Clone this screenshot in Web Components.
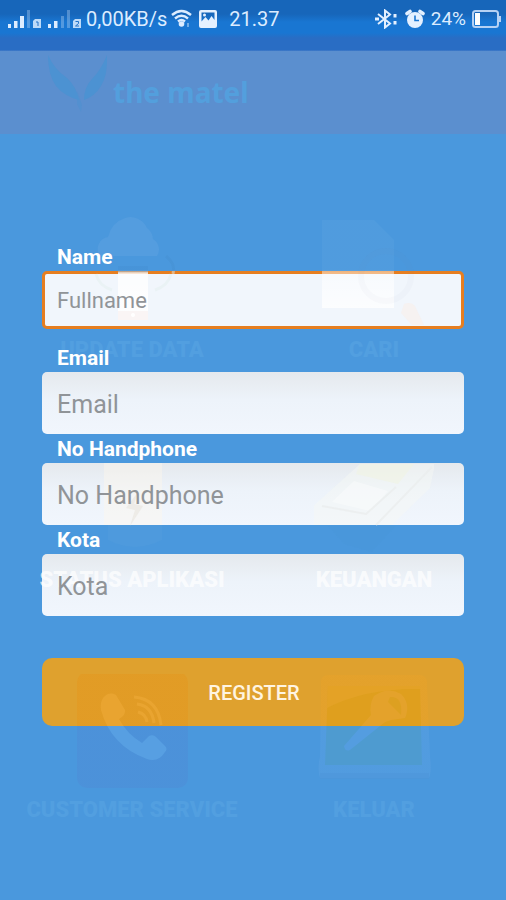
<!DOCTYPE html>
<html lang="id">
<head>
<meta charset="utf-8">
<meta name="viewport" content="width=device-width, initial-scale=1">
<title>Register</title>
<style>
html,body{margin:0;height:100%}
body{background:#4a98dd;font-family:Roboto,"Noto Sans",sans-serif}
</style>
</head>
<body>
<register-screen></register-screen>
<script>
const define=(name,html,init)=>customElements.define(name,class extends HTMLElement{
  constructor(){
    super();
    const t=document.createElement('template');
    t.innerHTML=html;
    this.attachShadow({mode:'open'}).append(t.content.cloneNode(true));
  }
  connectedCallback(){ if(init) init(this,this.shadowRoot); }
});

define('status-bar',`
<style>
:host{display:flex;align-items:flex-start;height:51px;box-sizing:border-box;padding:6px 5px 0 7px;color:#dcecff;
 background:linear-gradient(#1766ba 0 14px,#1976d2 22px 33px,#296dc4 38px 50px,#4a80ca 51px);font-size:20px;line-height:26px}
div{display:flex;align-items:center;height:26px}
svg{display:block;flex:none}
.left{gap:4px}.right{gap:6px;margin-left:auto;font-size:19px}
.image{margin-left:3px}
.time{margin-left:8px}
</style>
<div class="left">
 <svg width="75" height="24" viewBox="0 0 75 24" fill="#dcecff" aria-hidden="true">
  <path d="M1 17h3v4H1zM7 14h3.500v7H7zM13 9h4v12h-4zM41 17h3v4h-3zM47 14h3.500v7H47z"/>
  <path d="M20 3h3v18h-3zM54 9h3v12h-3zM60 3h3v18h-3z" opacity=".3"/>
  <path d="M28 12h6v9h-8v-7zM68 12h6v9h-8v-7z" opacity=".85"/>
  <path d="M29 15h2v4M68.500 14.500h3v2l-3 2.500h3.500" stroke="#2473c8" fill="none"/>
 </svg>
 <span>0,00KB/s</span>
 <svg width="21" height="20" viewBox="0 0 21 20" fill="none" stroke="#dcecff" stroke-width="2.400" aria-hidden="true">
  <path d="M1 6q9.500-8 19 0M4 9.500q6.500-5.500 13 0M7 12.500q3.500-3 7 0"/><circle cx="10.500" cy="15" r="2.800" fill="#dcecff" stroke="none"/><path d="M17 14v4" stroke-width="1.500" opacity=".6"/>
 </svg>
 <svg class="image" width="18" height="18" viewBox="0 0 18 18" aria-hidden="true">
  <path fill="#e4f0ff" fill-rule="evenodd" d="M2 0h14a2 2 0 0 1 2 2v14a2 2 0 0 1-2 2H2a2 2 0 0 1-2-2V2a2 2 0 0 1 2-2zM2.500 2.500v9l4-4.500 3 3.500 3-4.500 3 4v-7.500z"/><circle cx="5.500" cy="5" r="1.500" fill="#e4f0ff"/>
 </svg>
 <span class="time">21.37</span>
</div>
<div class="right">
 <svg width="24" height="20" viewBox="0 0 24 20" fill="none" stroke="#e4f0ff" stroke-width="2" aria-hidden="true">
  <path d="M3 5l12 9.500-5 4v-17l5 4L3 15"/><path d="M0 10h4M20 5v3.500M20 12v3.500" stroke-width="3"/>
 </svg>
 <svg width="20" height="20" viewBox="0 0 20 20" aria-hidden="true">
  <circle cx="10" cy="11" r="8" fill="#e4f0ff"/><path d="M2 4.500l3-2M18 4.500l-3-2" stroke="#e4f0ff" stroke-width="3.600" stroke-linecap="round"/><path d="M10 6.500v5h4" fill="none" stroke="#1976d2" stroke-width="1.600"/>
 </svg>
 <span>24%</span>
 <svg width="29" height="18" viewBox="0 0 29 18" aria-hidden="true">
  <rect x="1" y="1" width="25" height="16" rx="2.500" fill="none" stroke="#b5d1f4" stroke-width="2"/><path d="M3 3h5v12H3z" fill="#fff"/><path d="M27 6h2v6h-2z" fill="#b5d1f4"/>
 </svg>
</div>`);

define('brand-header',`
<style>
:host{display:flex;height:83px;box-sizing:border-box;padding:0 46px;background:#5b8fcf;color:#539fdd;font:700 28px/83px "Noto Sans",sans-serif;gap:5px}
svg{flex:none;margin-top:2px}
</style>
<svg width="62" height="60" viewBox="0 0 62 60" fill="#4993d3" opacity=".8" aria-hidden="true"><path d="M2 2Q8 16 21 25Q30 33 33 47Q18 43 10 33Q2 22 2 2zM61 2Q62 22 55 33Q49 43 38 47Q38 34 46 26Q55 17 61 2z"/><path d="M31 38l5 14-1 7-4-8z" opacity=".5"/></svg>
<span>the matel</span>`);

define('menu-tile',`
<style>
:host{display:flex;flex-direction:column;align-items:center;gap:4px;font-weight:900;font-size:22px;line-height:24px;color:var(--tone,#529fe0)}
span{white-space:nowrap}
</style>
<slot name="icon"></slot><span><slot></slot></span>`);

define('menu-backdrop',`
<style>
:host{display:grid;grid-template-columns:1fr 1fr;grid-auto-rows:148px;row-gap:82px;padding:80px 11px 0;pointer-events:none}
svg{width:120px;height:120px;display:block}
.light{--tone:rgba(255,255,255,.7)}
</style>
<menu-tile>
 <svg slot="icon" viewBox="0 0 120 120">
  <defs><linearGradient id="a" gradientUnits="userSpaceOnUse" x1="0" y1="56" x2="0" y2="114"><stop offset="0" stop-color="#3f88cb" stop-opacity=".25"/><stop offset=".05" stop-color="#fff" stop-opacity=".8"/><stop offset="1" stop-color="#fff" stop-opacity=".9"/></linearGradient>
  <linearGradient id="g" gradientUnits="userSpaceOnUse" x1="0" y1="0" x2="0" y2="120"><stop offset=".47" stop-color="#4590d2" stop-opacity=".5"/><stop offset=".48" stop-color="#e3efee" stop-opacity=".5"/></linearGradient></defs>
  <path d="M28 42a12 12 0 0 1 8-19 26 26 0 0 1 17-19 18 18 0 0 1 22 10 15 15 0 0 1 6 11 12 12 0 0 1 4 17z" fill="#5da2e1" opacity=".5"/>
  <path d="M24 60q3 12 16 16M99 60q-3 12-16 16M94 42q10 8 7 18" fill="none" stroke="url(#g)" stroke-width="3"/>
  <path d="M46 52h30v54H46z" fill="url(#a)"/>
  <path d="M46 97h30v9H46z" fill="#f9f2f2" opacity=".8"/><circle cx="61" cy="101" r="2" fill="#fff"/>
 </svg>UPDATE DATA</menu-tile>
<menu-tile>
 <svg slot="icon" viewBox="0 0 120 120">
  <defs><linearGradient id="b" gradientUnits="userSpaceOnUse" x1="0" y1="0" x2="0" y2="120"><stop offset=".47" stop-color="#fff" stop-opacity=".035"/><stop offset=".48" stop-color="#fff" stop-opacity=".45"/><stop offset=".8" stop-color="#fff" stop-opacity=".8"/></linearGradient></defs>
  <path d="M8 6h52l20 20v68H8z" fill="url(#b)"/>
  <circle cx="72" cy="62" r="25" fill="none" stroke="#7e8f98" stroke-width="6" opacity=".03"/>
  <path d="M90 90q7-3 11 2l9 19H98l-11-12z" fill="#fcede5" opacity=".5"/>
 </svg>CARI</menu-tile>
<menu-tile class="light">
 <svg slot="icon" viewBox="0 0 120 120">
  <path d="M32 19h58v62H32z" fill="#fff8ec" opacity=".4"/><path d="M36 81h54v15q-27 14-54 0z" fill="#64a7df" opacity=".15"/><path d="M66 48L54 64l9 2-5 16 13-20-9-2z" fill="#e5e2da" opacity=".5"/>
 </svg>STATUS APLIKASI</menu-tile>
<menu-tile class="light">
 <svg slot="icon" viewBox="0 0 120 120">
  <path d="M46 20h75l-5 24-38 37H-6V67z" fill="#f7f8f5" opacity=".45"/>
  <path d="M46 20h54l-16 20-42-10z" fill="#f0f4e2" opacity=".6"/>
  <path d="M40 37l34 10-18 20-38-9z" fill="#fff" opacity=".35"/><path d="M8 62l44 8 30-27M62 81l56-58" fill="none" stroke="#e9ecec" stroke-width="2" opacity=".7"/>
  <path d="M14 82h68l-24 26-28-8z" fill="#458fd2" opacity=".1"/>
 </svg>KEUANGAN</menu-tile>
<menu-tile>
 <svg slot="icon" viewBox="0 0 120 120">
  <defs><linearGradient id="c" gradientUnits="userSpaceOnUse" x1="0" y1="0" x2="0" y2="120"><stop offset=".435" stop-color="#e39921" stop-opacity=".65"/><stop offset=".436" stop-color="#4d8fd8" stop-opacity=".7"/></linearGradient>
  <linearGradient id="d" gradientUnits="userSpaceOnUse" x1="0" y1="0" x2="0" y2="120"><stop offset=".435" stop-color="#e9a430"/><stop offset=".436" stop-color="#579fe2"/></linearGradient></defs>
  <rect x="5" y="-2" width="111" height="116" rx="10" fill="url(#c)"/>
  <path d="M31 24q6-7 13-3l9 15q1 5-6 9 8 15 23 24l7-7q4-2 7 1l9 9q3 3 0 6-7 11-18 7-36-13-46-49-1-7 2-12z" fill="url(#d)"/>
  <path d="M62 23q24 2 27 28M65 30q15 2 17 19M66 38q8 2 9 10" fill="none" stroke="url(#d)" stroke-width="3"/>
 </svg>CUSTOMER SERVICE</menu-tile>
<menu-tile>
 <svg slot="icon" viewBox="0 0 120 120" opacity=".85">
  <defs><linearGradient id="e" gradientUnits="userSpaceOnUse" x1="0" y1="0" x2="0" y2="120"><stop offset=".435" stop-color="#e6a32b"/><stop offset=".436" stop-color="#569ee1"/></linearGradient>
  <linearGradient id="f" gradientUnits="userSpaceOnUse" x1="0" y1="0" x2="0" y2="120"><stop offset=".435" stop-color="#df9f1c"/><stop offset=".436" stop-color="#4f9cce"/></linearGradient></defs>
  <path d="M14 1h92q7 0 7 8l3 73q2 16-1 22H6q-3-8 0-22L7 9q0-8 7-8z" fill="url(#e)" opacity=".8"/>
  <path d="M14 12h92l2 79H11z" fill="url(#f)"/><path d="M14 12h92v3Q52 14 13 34z" fill="#e7a529" opacity=".7"/>
  <path d="M60 22q14-10 27-2 10 10 4 24l-14 2-6 2-35 28q-5 2-6-4l27-31q-2-10 3-19z" fill="url(#e)"/>
  <path d="M76 23q13-1 11 18L74 28z" fill="#dda01f"/><path d="M6 99h109v6H6z" fill="#4d94d7" opacity=".5"/>
 </svg>KELUAR</menu-tile>`);

/* The plate sits below the backdrop and the text box above it, so typed text stays clear. */
define('form-field',`
<style>
:host{display:grid;grid-template-rows:29px 62px}
label{z-index:1;line-height:30px;padding-left:15px;font-size:21px;font-weight:700;color:#fff}
.plate{grid-area:2/1;z-index:-1;box-sizing:border-box;border-radius:5px;background:linear-gradient(#e5e9ed,#edf3fa 45%,#f1f6fd)}
input{grid-area:2/1;z-index:1;width:100%;min-width:0;box-sizing:border-box;border:0;padding:2px 15px 0;margin:0;font:400 25px Roboto,sans-serif;color:#555;outline:none;background:transparent}
input::placeholder{color:#909498;opacity:1}
:host([active]){grid-template-rows:29px 58px;margin-bottom:14px}
:host([active]) .plate{border:3px solid #e67e20;background:#f1f6fc}
:host([active]) input{font-size:22px;padding-top:0}
</style>
<label for="field"></label><div class="plate"></div><input id="field" type="text">`,
(el,root)=>{
  root.querySelector('label').textContent=el.getAttribute('label');
  const input=root.querySelector('input');
  input.placeholder=el.getAttribute('hint');
  input.type=el.getAttribute('type')||'text';
});

define('action-button',`
<style>
:host{display:block}
button{display:block;width:100%;height:68px;border:0;border-radius:10px;padding:2px 0 0 2px;background:#dfa12e;color:#fff5e2;font:500 20px Roboto,sans-serif}
</style>
<button type="button"><slot></slot></button>`);

define('register-form',`
<style>
:host{display:block;padding:108px 42px 0}
action-button{margin-top:42px}
</style>
<form-field active label="Name" hint="Fullname"></form-field>
<form-field label="Email" hint="Email" type="email"></form-field>
<form-field label="No Handphone" hint="No Handphone" type="tel"></form-field>
<form-field label="Kota" hint="Kota"></form-field>
<action-button>REGISTER</action-button>`);

define('register-screen',`
<style>
:host{display:block;min-height:100vh;background:#4a98dd}
main{display:grid;isolation:isolate}
menu-backdrop,register-form{grid-area:1/1}
menu-backdrop{z-index:0}
</style>
<status-bar></status-bar>
<brand-header></brand-header>
<main><register-form></register-form><menu-backdrop aria-hidden="true"></menu-backdrop></main>`);
</script>
</body>
</html>
